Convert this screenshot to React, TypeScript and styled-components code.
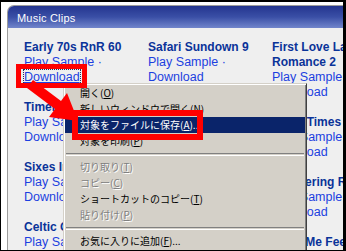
import styled, { createGlobalStyle } from 'styled-components'

const GlobalStyle = createGlobalStyle`
  html, body {
    margin: 0;
    padding: 0;
    background: #fff;
  }
`

const Frame = styled.div`
  position: relative;
  box-sizing: border-box;
  width: 346px;
  height: 251px;
  overflow: hidden;
  background: #fff;
  border-style: solid;
  border-color: #000;
  border-width: 2px 3px 1px 1px;
  font-family: 'Liberation Sans', Arial, sans-serif;
`

const Panel = styled.section`
  margin: 3px 0 0 6px;
  width: 420px;
  border: 1px solid #9c9c9c;
  border-right: none;
  border-top-left-radius: 7px;
  background: #efefef;
  overflow: hidden;
`

const PanelHeader = styled.h2`
  margin: 0;
  height: 22px;
  padding-left: 9px;
  background: linear-gradient(#24358f, #3a4fa6 50%, #7185cb);
  color: #fff;
  font-size: 11px;
  font-weight: normal;
  line-height: 24px;
  letter-spacing: 0.2px;
`

const ClipGrid = styled.div`
  display: grid;
  grid-template-columns: repeat(3, 124px);
  padding: 12px 0 0 16px;
`

const Clip = styled.div`
  font-size: 12.5px;
  line-height: 15px;
  padding-right: 4px;
  color: #1c3fe0;
`

const ClipTitle = styled.div`
  color: #0a3399;
  font-size: 12px;
  font-weight: bold;
  white-space: pre-line;
`

const ClipLink = styled.a<{ $focused?: boolean }>`
  color: #1c3fe0;
  text-decoration: ${(p) => (p.$focused ? 'underline' : 'none')};
  outline: ${(p) => (p.$focused ? '1px dotted #203060' : 'none')};
  cursor: pointer;
`

const ContextMenu = styled.ul`
  position: absolute;
  left: 62px;
  top: 81px;
  width: 244px;
  height: 190px;
  box-sizing: border-box;
  margin: 0;
  padding: 1px;
  list-style: none;
  background: #d4d0c8;
  border: 1px solid;
  border-color: #d4d0c8 #404040 #404040 #d4d0c8;
  box-shadow: inset 1px 1px #fff, inset -1px -1px #808080;
  font-family: 'Noto Sans CJK JP', 'Liberation Sans', sans-serif;
  font-size: 10px;
`

const MenuItem = styled.li<{ $active?: boolean; $disabled?: boolean }>`
  height: 16px;
  line-height: 16px;
  padding-left: 15px;
  white-space: nowrap;
  background: ${(p) => (p.$active ? '#0a246a' : 'transparent')};
  color: ${(p) => (p.$active ? '#fff' : p.$disabled ? '#808080' : '#000')};
  text-shadow: ${(p) => (p.$disabled ? '1px 1px 0 #fff' : 'none')};
`

const MenuSeparator = styled.li`
  height: 1px;
  margin: 4px 1px 3px;
  border-top: 1px solid #808080;
  border-bottom: 1px solid #fff;
`

const Callout = styled.div<{ $x: number; $y: number; $w: number; $h: number; $t: number }>`
  position: absolute;
  left: ${(p) => p.$x - 1}px;
  top: ${(p) => p.$y - 2}px;
  width: ${(p) => p.$w}px;
  height: ${(p) => p.$h}px;
  box-sizing: border-box;
  border: ${(p) => p.$t}px solid #f00;
`

const ArrowLayer = styled.svg`
  position: absolute;
  left: -1px;
  top: -2px;
`

type ClipData = { title: string; focused?: boolean }

const clips: ClipData[] = [
  { title: 'Early 70s RnR 60', focused: true },
  { title: 'Safari Sundown 9' },
  { title: 'First Love Last Romance 2' },
  { title: 'Timeless Hits 5' },
  { title: 'Heartbeat Ballads 7' },
  { title: 'Our\nGood Times 12' },
  { title: 'Sixes In Love 3' },
  { title: 'Midnight Drive 8' },
  { title: 'Wild\nWondering Rivers 4' },
  { title: 'Celtic Chill 4' },
  { title: 'Island Breeze 6' },
  { title: 'You\nMake Me Feel 6' },
]

export default function App() {
  return (
    <Frame>
      <GlobalStyle />
      <Panel>
        <PanelHeader>Music Clips</PanelHeader>
        <ClipGrid>
          {clips.map((c) => (
            <Clip key={c.title}>
              <ClipTitle>{c.title}</ClipTitle>
              <ClipLink>Play Sample</ClipLink> ·{' '}
              <ClipLink $focused={c.focused}>Download</ClipLink>
            </Clip>
          ))}
        </ClipGrid>
      </Panel>

      <ContextMenu>
        <MenuItem>開く(<u>O</u>)</MenuItem>
        <MenuItem>新しいウィンドウで開く(<u>N</u>)</MenuItem>
        <MenuItem $active>対象をファイルに保存(<u>A</u>)...</MenuItem>
        <MenuItem>対象を印刷(<u>P</u>)</MenuItem>
        <MenuSeparator />
        <MenuItem $disabled>切り取り(<u>T</u>)</MenuItem>
        <MenuItem $disabled>コピー(<u>C</u>)</MenuItem>
        <MenuItem>ショートカットのコピー(<u>T</u>)</MenuItem>
        <MenuItem $disabled>貼り付け(<u>P</u>)</MenuItem>
        <MenuSeparator />
        <MenuItem>お気に入りに追加(<u>F</u>)...</MenuItem>
      </ContextMenu>

      <Callout $x={16} $y={64} $w={71} $h={24} $t={5} />
      <Callout $x={72} $y={110} $w={131} $h={30} $t={6} />
      <ArrowLayer width={346} height={251}>
        <polygon
          points="27,88 33,80 61,101 67,93 78,121 49,117 55,109"
          fill="#f00"
        />
      </ArrowLayer>
    </Frame>
  )
}
